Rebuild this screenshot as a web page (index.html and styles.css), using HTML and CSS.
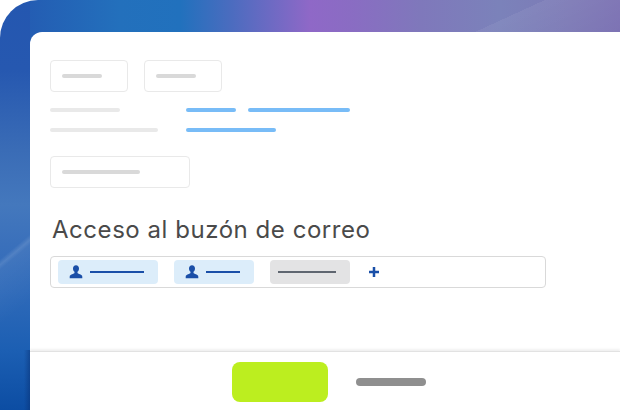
FILE: index.html
```html
<!DOCTYPE html>
<html lang="es">
<head>
<meta charset="utf-8">
<title>Acceso al buzón de correo</title>
<link rel="stylesheet" href="styles.css">
</head>
<body>
<div class="frame">
  <main class="card">
    <div class="content">
      <div class="tabs">
        <div class="box box-tab"><span class="bar bar-input w40"></span></div>
        <div class="box box-tab"><span class="bar bar-input w40"></span></div>
      </div>
      <div class="rows">
        <div class="row">
          <span class="bar bar-label w70"></span>
          <div class="links"><span class="bar bar-link w50"></span><span class="bar bar-link w102"></span></div>
        </div>
        <div class="row">
          <span class="bar bar-label w108"></span>
          <div class="links"><span class="bar bar-link w90"></span></div>
        </div>
      </div>
      <div class="box box-select"><span class="bar bar-input w78"></span></div>
      <h1 class="title">Acceso al buzón de correo</h1>
      <div class="tokens">
        <div class="chip chip-user chip-wide">
          <svg class="avatar" viewBox="0 0 14 14" aria-hidden="true"><path d="M7 .3c1.900 0 3 1.400 3 3.200 0 1.400-.6 2.600-1.500 3.300v1c0 .6 1.200 1 2.500 1.500 1.300.5 2.300 1.100 2.300 2.400v1.600H.700v-1.600c0-1.300 1-1.900 2.300-2.400 1.300-.5 2.500-.9 2.500-1.500v-1C4.600 6.100 4 4.900 4 3.500 4 1.700 5.100.3 7 .3z"/></svg>
          <span class="rule rule-blue w54"></span>
        </div>
        <div class="chip chip-user">
          <svg class="avatar" viewBox="0 0 14 14" aria-hidden="true"><path d="M7 .3c1.900 0 3 1.400 3 3.200 0 1.400-.6 2.600-1.500 3.300v1c0 .6 1.200 1 2.500 1.500 1.300.5 2.300 1.100 2.300 2.400v1.600H.700v-1.600c0-1.300 1-1.900 2.300-2.400 1.300-.5 2.500-.9 2.500-1.500v-1C4.600 6.100 4 4.900 4 3.500 4 1.700 5.100.3 7 .3z"/></svg>
          <span class="rule rule-blue w34"></span>
        </div>
        <div class="chip chip-grey"><span class="rule rule-grey w58"></span></div>
        <svg class="plus" viewBox="0 0 10 10" aria-hidden="true"><path d="M3.750 0h2.500v3.750H10v2.500H6.250V10h-2.500V6.250H0v-2.500h3.750z"/></svg>
      </div>
    </div>
    <footer class="footer">
      <div class="primary"></div>
      <span class="bar bar-cancel"></span>
    </footer>
  </main>
</div>
</body>
</html>
```
FILE: styles.css
```css
* { box-sizing: border-box; }
html, body { margin: 0; padding: 0; background: #fff; }
body { width: 620px; height: 410px; overflow: hidden; font-family: "Inter", "Liberation Sans", sans-serif; }

.frame {
  width: 620px;
  height: 410px;
  padding: 32px 0 0 30px;
  border-top-left-radius: 38px;
  display: flex;
  background:
    linear-gradient(90deg, transparent 0, rgba(8,45,110,.45) 100%) 24px 350px / 6px 60px no-repeat,
    linear-gradient(140.2deg, transparent 59.6%, rgba(255,255,255,.13) 60.9%, rgba(255,255,255,.05) 62%, transparent 75%) left top / 30px 100% no-repeat,
    linear-gradient(180deg, #2457b0 0, #2658b0 70px, #3a6cb6 150px, #4478bd 205px, #3a70bb 245px, #2f6ab9 290px, #1c5fb3 350px, #0c4da3 410px) left top / 30px 100% no-repeat,
    linear-gradient(155.4deg, transparent 32.5%, rgba(255,255,255,.06) 32.6%, transparent 100%) right top / 145px 32px no-repeat,
    linear-gradient(90deg, #2457b0 0, #2370bc 120px, #2171bd 180px, #4a6cbf 230px, #8f68c7 310px, #8a6cc3 350px, #7f78bb 420px, #7b82ba 500px, #7d7ab6 570px, #7d73b4 620px);
}

.card {
  flex: 1;
  display: flex;
  flex-direction: column;
  background: #fff;
  border-top-left-radius: 12px;
  overflow: hidden;
}

.content {
  flex: 1;
  padding: 28px 0 0 20px;
}

.tabs { display: flex; gap: 16px; }

.box {
  display: flex;
  align-items: center;
  height: 32px;
  background: #fff;
  border: 1px solid #e9e9e9;
  border-radius: 4px;
}
.box-tab { width: 78px; padding-left: 11px; }
.box-select { width: 140px; padding-left: 11px; margin-top: 24px; }

.bar { display: block; height: 4px; border-radius: 2px; }
.bar-input { background: #d9d9d9; }
.bar-label { background: #e9e9e9; }
.bar-link { background: #78bcf7; }

.w40 { width: 40px; }
.w50 { width: 50px; }
.w70 { width: 70px; }
.w78 { width: 78px; }
.w90 { width: 90px; }
.w102 { width: 102px; }
.w108 { width: 108px; }
.w34 { width: 34px; }
.w54 { width: 54px; }
.w58 { width: 58px; }

.rows { display: flex; flex-direction: column; gap: 16px; margin-top: 16px; }
.row { display: grid; grid-template-columns: 136px 1fr; align-items: center; }
.links { display: flex; gap: 12px; }

.title {
  margin: 26px 0 0 2px;
  font-size: 24px;
  line-height: 32px;
  font-weight: 400;
  letter-spacing: .54px;
  color: #4a4a4a;
  white-space: nowrap;
}

.tokens {
  display: flex;
  align-items: center;
  width: 496px;
  height: 32px;
  margin-top: 10px;
  padding-left: 7px;
  background: #fff;
  border: 1px solid #d9d9d9;
  border-radius: 4px;
}

.chip {
  display: flex;
  align-items: center;
  width: 80px;
  height: 24px;
  margin-right: 16px;
  border-radius: 4px;
}
.chip-wide { width: 100px; }
.chip-user { padding-left: 11px; gap: 7px; background: #dcedfa; }
.chip-grey { padding-left: 8px; background: #e3e3e4; }

.avatar { width: 14px; height: 14px; fill: #1a4fa8; flex: none; }
.rule { display: block; height: 2px; }
.rule-blue { background: #1a4fa8; }
.rule-grey { background: #5f6670; }

.plus { width: 10px; height: 10px; margin-left: 3px; fill: #1a4fa8; }

.footer {
  display: flex;
  align-items: center;
  gap: 28px;
  height: 59px;
  padding: 2px 0 0 202px;
  border-top: 1px solid #e2e2e2;
  box-shadow: 0 -2px 2px #f1f1f1;
}
.primary { width: 96px; height: 40px; background: #bcee1f; border-radius: 8px; }
.bar-cancel { width: 70px; height: 8px; border-radius: 4px; background: #8f8f8f; }
```
